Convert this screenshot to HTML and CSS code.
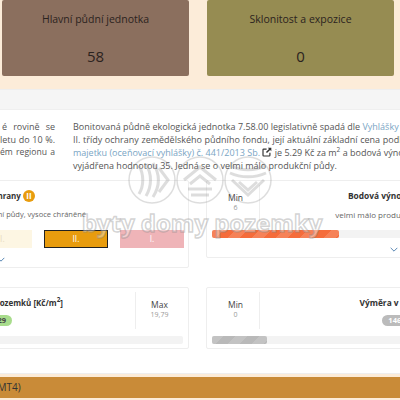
FILE: index.html
```html
<!DOCTYPE html>
<html lang="cs">
<head>
  <meta charset="UTF-8">
  <title>Bonitovaná půdně ekologická jednotka</title>
  <link rel="stylesheet" href="styles.css">
</head>
<body>
  <section class="top">
    <div class="top-card brown">
      <div class="top-title">Hlavní půdní jednotka</div>
      <div class="top-value">58</div>
    </div>
    <div class="top-card olive">
      <div class="top-title">Sklonitost a expozice</div>
      <div class="top-value">0</div>
    </div>
  </section>

  <div class="gray-strip"></div>

  <section class="content">
    <div class="texts">
      <p class="text-left">
        <span class="line fit fit-1">é rovině se</span>
        <span class="line fit fit-2">letu do 10 %.</span>
        <span class="line fit fit-3">ém regionu a</span>
      </p>
      <p class="text-right">
        <span class="line">Bonitovaná půdně ekologická jednotka 7.58.00 legislativně spadá dle <a>Vyhlášky č. 227/2018</a></span>
        <span class="line wide">II. třídy ochrany zemědělského půdního fondu, její aktuální základní cena podle</span>
        <span class="line"><a>majetku (oceňovací vyhlášky) č. 441/2013 Sb.</a>
          <svg class="ext" viewBox="0 0 12 12"><path d="M9.500 7v3a.8.8 0 0 1-.8.8H2a.8.8 0 0 1-.8-.8V3.300A.8.8 0 0 1 2 2.500h3.500" fill="none" stroke="#333" stroke-width="1.400"/><path d="M7 .8h4.200V5L9.700 3.600 6 7.300 4.700 6 8.400 2.300z" fill="#333"/></svg>
          je 5.29 Kč za m<sup>2</sup> a bodová výnosnost</span>
        <span class="line">vyjádřena hodnotou 35. Jedná se o velmi málo produkční půdy.</span>
      </p>
    </div>

    <div class="cards first">
      <div class="card card-left">
        <div class="head-title ochrana">Třída ochrany <span class="roman">II</span></div>
        <div class="sub ochrana-sub">Kvalitní půdy, vysoce chráněné</div>
        <div class="classes">
          <div class="cls cls-3">III.</div>
          <div class="cls cls-2">II.</div>
          <div class="cls cls-1">I.</div>
        </div>
        <svg class="chev" viewBox="0 0 12 7"><path d="M1 1l5 5 5-5" fill="none" stroke="#3f74a8" stroke-width="1.300"/></svg>
      </div>
      <div class="card card-right">
        <div class="stat-row">
          <div class="minmax min-box"><b>Min</b><small>6</small></div>
          <div class="stat-main">
            <div class="head-title">Bodová výnosnost</div>
            <div class="sub">velmi málo produkční půdy</div>
          </div>
        </div>
        <div class="bar"><div class="fill orange"></div></div>
        <svg class="chev" viewBox="0 0 12 7"><path d="M1 1l5 5 5-5" fill="none" stroke="#3f74a8" stroke-width="1.300"/></svg>
      </div>
    </div>

    <div class="cards second">
      <div class="card card-left">
        <div class="stat-row">
          <div class="stat-main price">
            <div class="head-title">Cena pozemků [Kč/m<sup>2</sup>]</div>
            <span class="pill green">5,29</span>
          </div>
          <div class="minmax max-box"><b>Max</b><small>19,79</small></div>
        </div>
        <div class="bar"></div>
      </div>
      <div class="card card-right">
        <div class="stat-row">
          <div class="minmax min-box"><b>Min</b><small>0</small></div>
          <div class="stat-main">
            <div class="head-title">Výměra v ČR [km<sup>2</sup>]</div>
            <span class="pill gray">146,2</span>
          </div>
        </div>
        <div class="bar"><div class="fill gray-fill"></div></div>
      </div>
    </div>
  </section>

  <section class="band-wrap">
    <div class="band">Kambizemě modální (KAMT4)</div>
  </section>

  <!-- watermark over the page -->
  <div class="watermark">
    <svg class="wm-logo" viewBox="0 0 146 48">
      <g fill="none" stroke="#888" stroke-width="1.500">
        <circle cx="24" cy="24" r="23"/>
        <circle cx="72" cy="24" r="23"/>
        <circle cx="120" cy="24" r="23"/>
      </g>
      <g fill="none" stroke="#888" stroke-width="3">
        <path d="M11 10c5 8 5 20 0 28M18 8c6 10 6 22 0 32M25 7c7 11 7 23 0 34M31 12l9 12-9 12"/>
        <path d="M56 24l16-13 16 13M62 28l10-8 10 8M60 33h24M63 39h18"/>
        <path d="M103 10c10 5 24 5 34 0M102 17c11 5 25 5 36 0M104 24l16 15 16-15M111 26l9 8 9-8"/>
      </g>
    </svg>
    <div class="wm-text">byty domy pozemky</div>
  </div>
</body>
</html>
```

FILE: styles.css
```css
* {
  box-sizing: border-box;
  margin: 0;
  padding: 0;
}

html, body {
  width: 400px;
  height: 400px;
  overflow: hidden;
}

body {
  position: relative;
  font-family: "Open Sans", sans-serif;
  font-size: 9px;
  color: #555;
  background: #fff;
}

a {
  color: #7aa5c4;
}

sup {
  font-size: 6.500px;
  line-height: 0;
}

/* top cards */
.top {
  display: flex;
  gap: 18px;
  height: 90px;
  padding: 0 6px 13px 2px;
  background: #fcecd9;
  border-bottom: 1px solid #eee;
}

.top-card {
  flex: 0 0 187px;
  border-radius: 2px;
  text-align: center;
  color: #2b2320;
}

.brown {
  background: #8b6f5e;
}

.olive {
  background: #968c52;
}

.top-title {
  margin-top: 11px;
  font-size: 10.500px;
  line-height: 16px;
}

.top-value {
  margin-top: 18px;
  font-size: 15px;
  line-height: 22px;
}

.gray-strip {
  height: 20px;
  background: #f5f5f5;
  border-bottom: 1px solid #efefef;
}

/* text and stat cards */
.content {
  height: 263px;
  padding-top: 10px;
}

.texts {
  display: flex;
  height: 60px;
}

.text-left {
  flex: 0 0 58px;
  min-width: 0;
  margin-left: -3px;
  line-height: 13px;
  white-space: nowrap;
}

.fit {
  text-align: justify;
  text-align-last: justify;
}

.fit-1 {
  padding-left: 5px;
}

.fit-2 {
  padding-left: 3px;
}

.fit-3 {
  padding-left: 3px;
  font-size: 8.600px;
}

.text-right {
  flex: 0 0 340px;
  min-width: 0;
  margin-left: 18px;
  line-height: 13px;
  white-space: nowrap;
}

.line {
  display: block;
}

.wide {
  word-spacing: .3px;
}

.ext {
  width: 10px;
  height: 10px;
  vertical-align: -1px;
}

.cards {
  display: flex;
  gap: 17px;
  align-items: flex-start;
  margin-left: -60px;
}

.first {
  height: 107px;
}

.card {
  position: relative;
  flex: 0 0 249px;
  background: #fff;
  border: 1px solid #eee;
  border-radius: 2px;
  padding: 4px 5px;
}

.first .card-left {
  height: 88px;
}

.first .card-right {
  flex-basis: 312px;
  height: 78px;
}

.second .card {
  height: 62px;
}

.second .card-right {
  flex-basis: 336px;
}

.head-title {
  margin-top: 4px;
  font-weight: 700;
  font-size: 8.400px;
  line-height: 14px;
  color: #333;
  text-align: center;
  white-space: nowrap;
}

.sub {
  margin-top: 5px;
  font-size: 8px;
  line-height: 13px;
  text-align: center;
  white-space: nowrap;
  color: #666;
}

.ochrana {
  font-size: 8px;
  text-align: right;
  padding-right: 148px;
}

.ochrana-sub {
  font-size: 7.500px;
  text-align: right;
  padding-right: 97px;
}

.roman {
  display: inline-block;
  width: 12px;
  height: 12px;
  border-radius: 6px;
  background: #e89c0e;
  color: #fff;
  font-size: 8px;
  line-height: 12px;
  text-align: center;
  vertical-align: 0;
}

.classes {
  display: flex;
  justify-content: flex-end;
  gap: 12px;
  margin: 9px -1px 0 0;
}

.cls {
  flex: 0 0 64px;
  height: 18px;
  font-size: 8.500px;
  line-height: 18px;
  text-align: center;
  color: #fff;
}

.cls-3 {
  background: #fdf6e3;
  color: #e8dcc0;
}

.cls-2 {
  background: #e89c0e;
  border: 1px solid #222;
  line-height: 16px;
}

.cls-1 {
  background: #efb4b8;
}

.chev {
  position: absolute;
  width: 8px;
  height: 5px;
  bottom: 5px;
}

.card-left .chev {
  left: 56px;
}

.card-right .chev {
  left: 183px;
}

.stat-row {
  display: flex;
  height: 37px;
}

.minmax {
  flex: 0 0 48px;
  text-align: center;
  padding-top: 6px;
}

.minmax b {
  display: block;
  font-weight: 400;
  font-size: 8.500px;
  line-height: 13px;
  color: #444;
}

.minmax small {
  display: block;
  font-size: 7px;
  line-height: 8px;
  color: #999;
}

.min-box {
  border-right: 1px solid #eee;
}

.max-box {
  border-left: 1px solid #eee;
}

.stat-main {
  flex: 1;
  text-align: center;
}

.price {
  padding-right: 72px;
  text-align: right;
}

.price .head-title {
  font-size: 8px;
  text-align: right;
}

.price .pill {
  margin-right: 51px;
}

.bar {
  height: 8px;
  margin-top: 8px;
  background: #f3f3f3;
  border-radius: 2px;
}

.second .bar {
  margin-top: 7px;
}

.fill {
  height: 100%;
  border-radius: 2px;
  background-image: linear-gradient(135deg, rgba(255,255,255,.15) 25%, transparent 25%, transparent 50%, rgba(255,255,255,.15) 50%, rgba(255,255,255,.15) 75%, transparent 75%);
  background-size: 24px 24px;
}

.orange {
  width: 127px;
  background-color: #f56c3b;
}

.gray-fill {
  width: 55px;
  background-color: #b9b9b9;
}

.pill {
  display: inline-block;
  margin-top: 5px;
  padding: 0 6px;
  height: 11px;
  border-radius: 6px;
  font-size: 7.500px;
  font-weight: 700;
  line-height: 11px;
  vertical-align: top;
}

.green {
  background: #a8dc8c;
  color: #444;
}

.gray {
  background: #bbb;
  color: #fff;
}

/* bottom band */
.band-wrap {
  height: 27px;
  padding: 3px 0 2px;
  background: #fcecd9;
  border-top: 1px solid #eee;
}

.band {
  height: 21px;
  margin-left: -122px;
  padding-left: 6px;
  background: #c98b38;
  color: #333;
  font-size: 10px;
  line-height: 21px;
  white-space: nowrap;
}

/* watermark */
.watermark {
  position: absolute;
  left: 62px;
  top: 156px;
  width: 280px;
  pointer-events: none;
}

.wm-logo {
  display: block;
  width: 146px;
  height: 48px;
  margin-left: 66px;
  opacity: .28;
}

.wm-text {
  font-weight: 700;
  font-size: 24px;
  line-height: 36px;
  margin-top: 1px;
  text-align: center;
  color: rgba(255, 255, 255, .35);
  -webkit-text-stroke: 1.500px rgba(130, 130, 130, .35);
  white-space: nowrap;
}
```
